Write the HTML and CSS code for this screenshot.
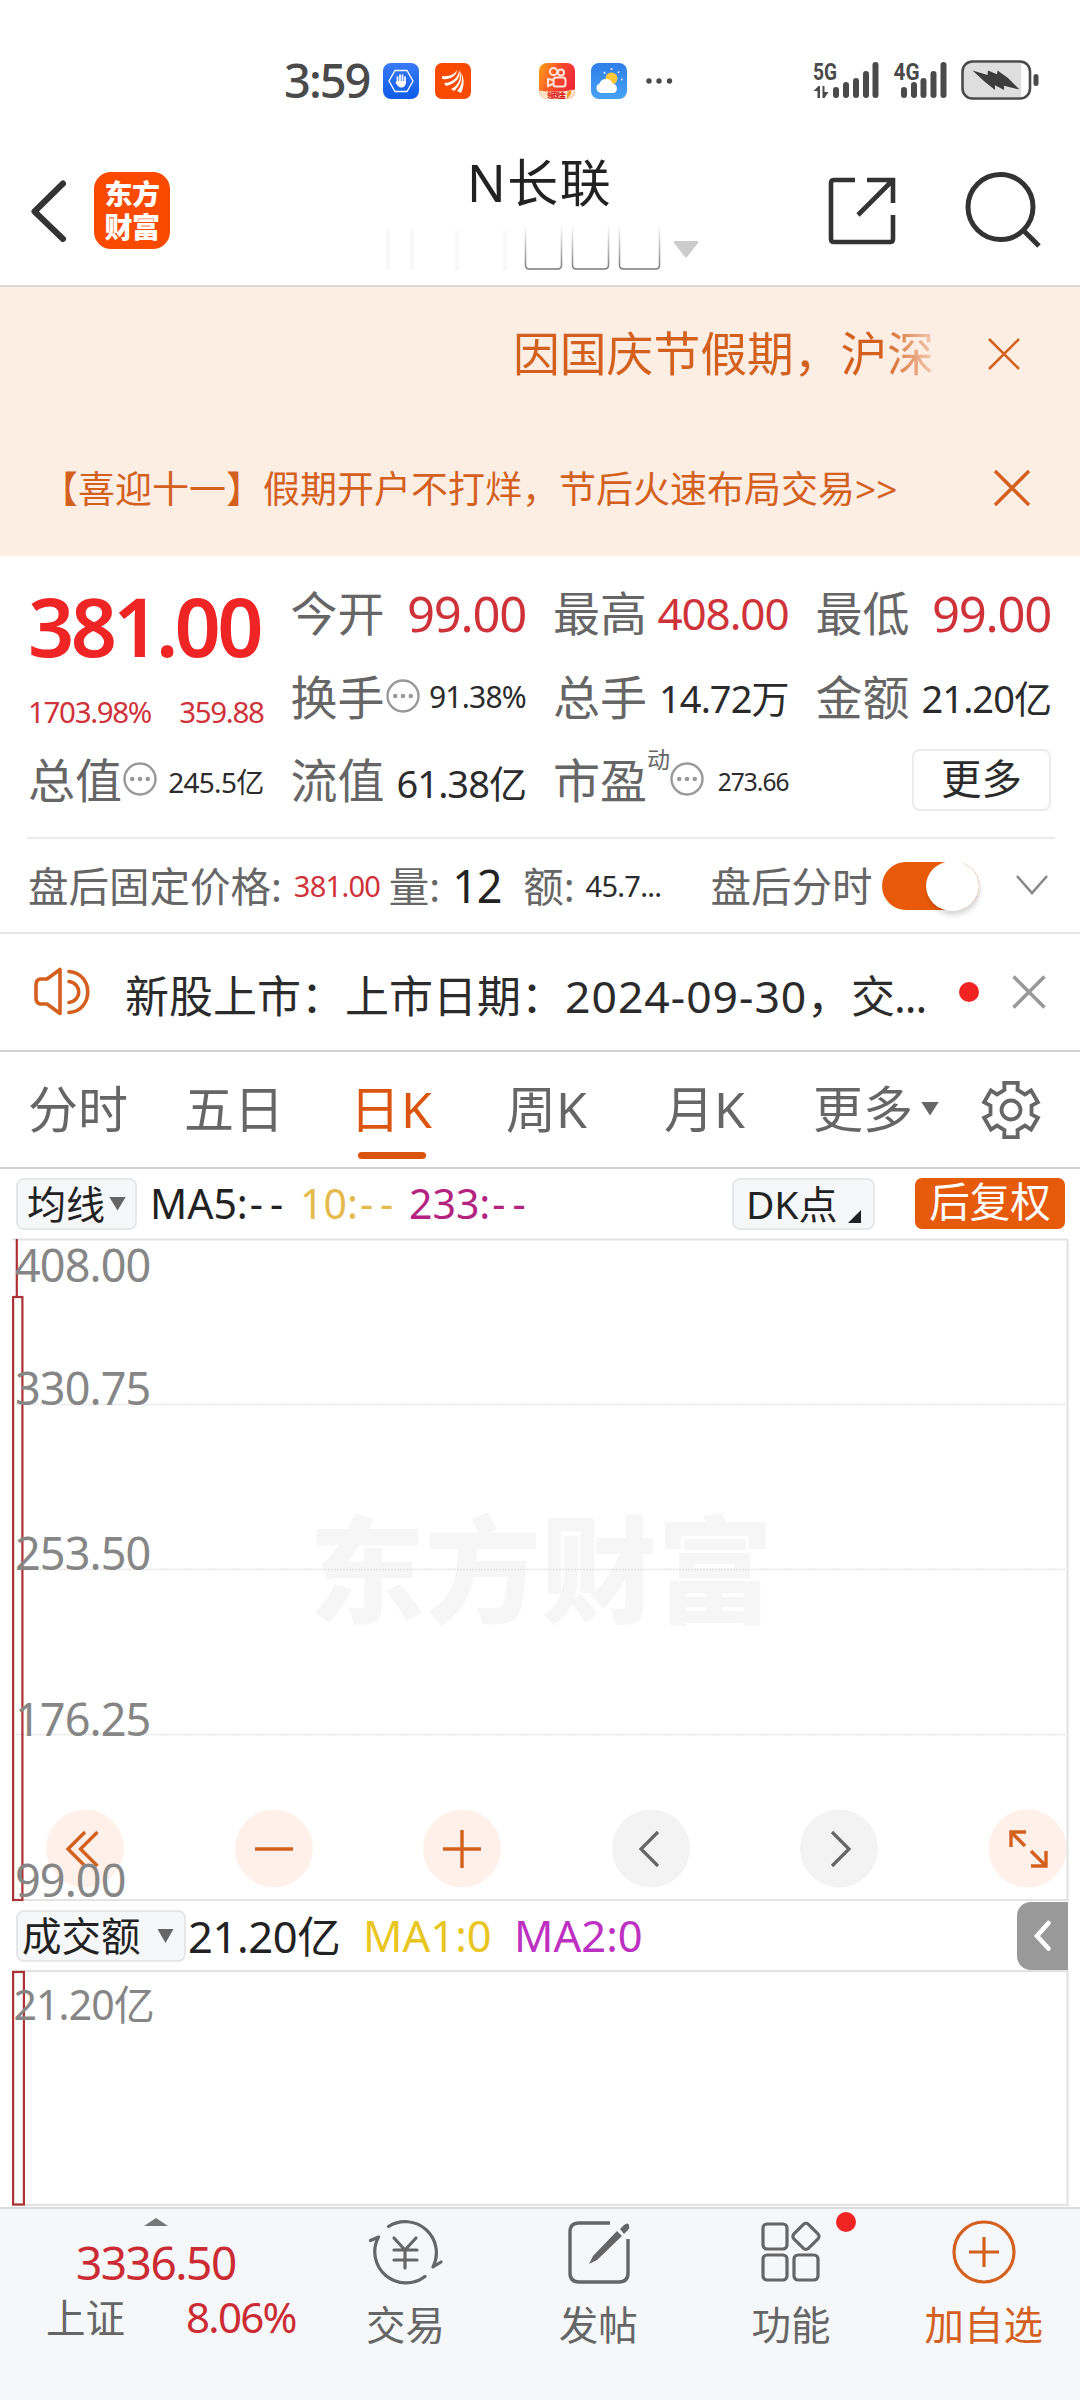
FILE: index.html
```html
<!DOCTYPE html>
<html lang="zh-CN">
<head>
<meta charset="utf-8">
<title>N长联</title>
<link rel="stylesheet" href="styles.css">
</head>
<body>
<svg class="defs" width="0" height="0">
  <symbol id="info" viewBox="0 0 36 36"><circle cx="18" cy="18" r="15.5" fill="none" stroke="#999" stroke-width="2.4"/><circle cx="10.2" cy="18" r="2.3" fill="#999"/><circle cx="18" cy="18" r="2.3" fill="#999"/><circle cx="25.8" cy="18" r="2.3" fill="#999"/></symbol>
</svg>

<div class="status">
  <span class="clock">3:59</span>
  <svg class="app-icon" viewBox="0 0 36 36"><defs><linearGradient id="gb" x1="0" y1="0" x2="0" y2="1"><stop offset="0" stop-color="#3a7af5"/><stop offset="1" stop-color="#0f5be8"/></linearGradient></defs><rect width="36" height="36" rx="8" fill="url(#gb)"/><path d="M12 7.500h12l6 10.500-6 10.500H12L6 18z" fill="none" stroke="#fff" stroke-width="1.300"/><path d="M14.500 14v6M17 12v8M19.500 12v8M22 14v6" stroke="#fff" stroke-width="1.700" stroke-linecap="round"/><path d="M13.600 18h9.300c0 4-1 6.500-4.500 6.500-2.500 0-4-1.500-6-5 .3-1 .8-.9 1.200-.5z" fill="#fff"/></svg>
  <svg class="app-icon" viewBox="0 0 36 36"><rect width="36" height="36" rx="7" fill="#fa4a00"/><path d="M7 13c7 1 13-2 15-6 0 5-6 10-15 9zM9 20c8 0 15-6 15-13 3 7-4 14-13 16zM16 26c7-3 10-10 9-18 3 7 0 15-6 20z" fill="#fff"/><path d="M22 28c5-5 6-12 4-19 4 7 3 15 0 21z" fill="#fff"/></svg>
  <svg class="app-icon gap-wide" viewBox="0 0 36 36"><defs><linearGradient id="go" x1="0" y1="0" x2="1" y2=".4"><stop offset="0" stop-color="#ffa216"/><stop offset=".6" stop-color="#f8472c"/><stop offset="1" stop-color="#ee2a3a"/></linearGradient></defs><rect width="36" height="36" rx="8" fill="url(#go)"/><g fill="none" stroke="#ffe6da" stroke-width="2"><circle cx="14.500" cy="8.500" r="3.600"/><circle cx="22" cy="9.500" r="3"/><rect x="14.500" y="14.500" width="12" height="9" rx="2.500"/><path d="M14 17l-5-1v7l5-2"/></g><path d="M0 27.500q18 3 36-1V28a8 8 0 0 1-8 8H8a8 8 0 0 1-8-8z" fill="#ffe3c4"/><text x="8" y="34.500" font-size="7" font-weight="900" fill="#d9201c" textLength="19">领现金</text><path d="M28 30l4-4v5l-4 5z" fill="#f59a2a"/></svg>
  <svg class="app-icon gap" viewBox="0 0 36 36"><defs><linearGradient id="gw" x1="0" y1="0" x2="0" y2="1"><stop offset="0" stop-color="#2f7de8"/><stop offset="1" stop-color="#47a3f5"/></linearGradient></defs><rect width="36" height="36" rx="8" fill="url(#gw)"/><circle cx="20.500" cy="15.500" r="6" fill="#ffc83c"/><path d="M13 9l1 1.500M20.500 5v2M28 8.500l-1 1.200M31.500 16.500H30" stroke="#fff" stroke-width="1.400"/><path d="M9.500 30a5 5 0 0 1-1-9.500 7 7 0 0 1 13 0A5 5 0 0 1 23 30z" fill="#fff"/></svg>
  <svg class="dots" width="28" height="8" viewBox="0 0 28 8"><g fill="#4a4a4a"><circle cx="4" cy="4" r="2.700"/><circle cx="14" cy="4" r="2.700"/><circle cx="24.500" cy="4" r="2.700"/></g></svg>
  <svg class="signals" width="232" height="46" viewBox="810 57 232 46">
    <g fill="#4a4a4a">
      <text class="net" x="813" y="79.500" textLength="24" lengthAdjust="spacingAndGlyphs">5G</text>
      <text class="net" x="893.500" y="79.500" textLength="26" lengthAdjust="spacingAndGlyphs">4G</text>
      <path d="M813.500 91l5-5h1.500v12h-2.500v-7zM828.500 92l-4 6h-2V86h2v6z"/>
      <rect x="833" y="87" width="6" height="11" rx="3"/><rect x="843" y="82" width="6" height="16" rx="3"/><rect x="853" y="78" width="6" height="20" rx="3"/><rect x="863" y="71" width="6" height="27" rx="3"/><rect x="872.500" y="62" width="6" height="36" rx="3"/>
      <rect x="901" y="87" width="6" height="11" rx="3"/><rect x="911" y="82" width="6" height="16" rx="3"/><rect x="920.500" y="78" width="6" height="20" rx="3"/><rect x="930.500" y="71" width="6" height="27" rx="3"/><rect x="940.500" y="62" width="6" height="36" rx="3"/>
      <rect x="1033.500" y="74" width="5" height="12" rx="2.500"/>
    </g>
    <path d="M972 63h49v34h-49a9 9 0 0 1-9-9V72a9 9 0 0 1 9-9z" fill="#dedede"/>
    <rect x="962.500" y="61.500" width="67.500" height="37" rx="10" fill="none" stroke="#4a4a4a" stroke-width="2.600"/>
    <path d="M972.500 70.500l15 4.500.5-4.500 9 3.800.5-3.800 10.500 7.500 11.500 11.500-15.500-3.800v4.300l-9-4.800v4.800l-10-8z" fill="#3c3c3c"/>
  </svg>
</div>

<header class="header">
  <svg class="back" width="40" height="66" viewBox="0 0 40 66"><path d="M35 5.500L6.500 33.500 35 61" fill="none" stroke="#333" stroke-width="6" stroke-linecap="round" stroke-linejoin="round"/></svg>
  <div class="logo"><span>东方</span><span>财富</span></div>
  <div class="heading">
    <h1>N长联</h1>
    <svg class="ghost" width="330" height="48" viewBox="380 223 330 48">
      <defs><linearGradient id="fade" gradientUnits="userSpaceOnUse" x1="0" y1="224" x2="0" y2="270"><stop offset="0" stop-color="#888" stop-opacity="0"/><stop offset="1" stop-color="#777"/></linearGradient></defs>
      <g fill="none" stroke="url(#fade)" stroke-width="1.600"><path d="M525.500 225v40q0 4 4 4h28q4 0 4-4v-40M572.500 225v40q0 4 4 4h28q4 0 4-4v-40M619.500 225v40q0 4 4 4h32q4 0 4-4v-40"/></g>
      <path d="M388 230v40M412 230v40M457 230v40M505 230v40" stroke="#f9f9f9" stroke-width="4"/>
      <path d="M675 241h22q2 0 1 2l-11 14q-1 1-2 0l-11-14q-1-2 1-2z" fill="#ccc"/>
    </svg>
  </div>
  <svg class="share" width="70" height="70" viewBox="0 0 70 70"><path d="M29 4H8q-3 0-3 3v56q0 3 3 3h56q3 0 3-3V39M41 4h26v23M66 5L32 39" fill="none" stroke="#333" stroke-width="4.600"/></svg>
  <svg class="search" width="80" height="80" viewBox="0 0 80 80"><circle cx="36.500" cy="37" r="32.500" fill="none" stroke="#333" stroke-width="5"/><path d="M60 61l15 15" stroke="#333" stroke-width="5"/></svg>
</header>

<section class="banner">
  <div class="notice first"><span class="marquee">因国庆节假期，沪深</span><svg width="34" height="34" viewBox="0 0 34 34"><path d="M2 2l30 30M32 2L2 32" stroke="#d4601f" stroke-width="2.600"/></svg></div>
  <div class="notice second"><span>【喜迎十一】假期开户不打烊，节后火速布局交易&gt;&gt;</span><svg width="38" height="38" viewBox="0 0 38 38"><path d="M2 2l34 34M36 2L2 36" stroke="#d4601f" stroke-width="3.400"/></svg></div>
</section>

<section class="quote">
  <div class="cell price">381.00</div>
  <div class="cell"><label>今开</label><b class="up n49">99.00</b></div>
  <div class="cell"><label>最高</label><b class="up n44">408.00</b></div>
  <div class="cell"><label>最低</label><b class="up n49">99.00</b></div>
  <div class="cell change"><b class="up n29">1703.98%</b><b class="up n29">359.88</b></div>
  <div class="cell"><label>换手</label><svg class="info"><use href="#info"/></svg><b class="n30">91.38%</b></div>
  <div class="cell"><label>总手</label><b class="n38">14.72万</b></div>
  <div class="cell"><label>金额</label><b class="n38">21.20亿</b></div>
  <div class="cell low"><label>总值</label><svg class="info"><use href="#info"/></svg><b class="n28">245.5亿</b></div>
  <div class="cell low"><label>流值</label><b class="n38">61.38亿</b></div>
  <div class="cell low"><label>市盈</label><sup>动</sup><svg class="info"><use href="#info"/></svg><b class="n25">273.66</b></div>
  <div class="cell end"><button class="more">更多</button></div>
</section>

<section class="after">
  <span class="a-label">盘后固定价格:</span><span class="num up a-price">381.00</span>
  <span class="a-label">量:</span><span class="num a-vol">12</span>
  <span class="a-label">额:</span><span class="num a-amt">45.7...</span>
  <span class="a-label">盘后分时</span>
  <span class="toggle"><i></i></span>
  <svg class="chev" width="34" height="22" viewBox="0 0 34 22"><path d="M2 2l15 17L32 2" fill="none" stroke="#888" stroke-width="2.600"/></svg>
</section>

<section class="news">
  <svg width="58" height="52" viewBox="0 0 58 52"><g fill="none" stroke="#d4601f" stroke-width="3.600" stroke-linejoin="round" stroke-linecap="round"><path d="M27 3.500v44L14 38H7q-4-1-4-6V19q0-5 4-6h7z"/><path d="M36 5.500c25 2 25 39 0 41M36 15.500c13 2 13 19 0 21"/></g></svg>
  <p>新股上市：上市日期：<span class="num">2024-09-30</span>，<span class="rest">交...</span></p>
  <i class="reddot"></i>
  <svg class="close" width="34" height="34" viewBox="0 0 34 34"><path d="M1.500 1.500l31 31M32.500 1.500l-31 31" stroke="#999" stroke-width="3.600"/></svg>
</section>

<nav class="tabs">
  <span>分时</span><span>五日</span><span class="active">日K</span><span>周K</span><span>月K</span><span>更多<i class="tri"></i></span>
  <svg width="60" height="60" viewBox="-30 -30 60 60"><path d="M-6.500-20l-.3-7.200H6.800L6.500-20l7.500 4.400 6.100-3.900 6.800 11.800-6.400 3.300v8.800l6.400 3.300-6.800 11.800-6.100-3.900L6.500 20l.3 7.200H-6.800L-6.500 20l-7.500-4.400-6.100 3.900-6.800-11.800 6.400-3.300v-8.800l-6.400-3.300 6.800-11.800 6.100 3.900z" fill="none" stroke="#666" stroke-width="3.800"/><circle r="9.500" fill="none" stroke="#666" stroke-width="3.800"/></svg>
</nav>

<section class="bar ma">
  <span class="chip c-ma">均线<i class="tri"></i></span>
  <span class="m1">MA5:<em>--</em></span><span class="m2">10:<em>--</em></span><span class="m3">233:<em>--</em></span>
  <span class="chip c-dk">DK点<svg width="13" height="13" viewBox="0 0 13 13"><path d="M13 0v13H0z" fill="#222"/></svg></span>
  <span class="adjust">后复权</span>
</section>

<svg class="chart" width="1080" height="664" viewBox="0 1238 1080 664">
  <path d="M12 1239.500H1067.500V1900H12" fill="none" stroke="#e3e3e3" stroke-width="2.200"/>
  <text class="mark" x="309" y="1614" textLength="464">东方财富</text>
  <path d="M13 1404.500H1066M13 1569.500H1066M13 1734.500H1066" class="grid"/>
  <g fill="#fff1ea"><circle cx="85" cy="1848.500" r="39"/><circle cx="274" cy="1848.500" r="39"/><circle cx="462" cy="1848.500" r="39"/><path d="M1066 1842a39 39 0 1 0 0 13z"/></g>
  <g fill="#f3f3f3"><circle cx="651" cy="1848.500" r="39"/><circle cx="839" cy="1848.500" r="39"/></g>
  <g fill="none" stroke="#d4601f" stroke-width="3.400"><path d="M85 1832l-17 17 17 17M97.500 1832l-17 17 17 17M255 1849h38M443 1849h38M462 1830v38"/><path d="M1026 1832h-15v15M1011 1832l14 14M1031 1866h15v-15M1046 1866l-15-15"/></g>
  <path d="M658 1832l-17 17 17 17M832 1832l17 17-17 17" fill="none" stroke="#666" stroke-width="3.200"/>
  <g fill="none" stroke="#ac3236" stroke-width="2.200"><path d="M16.800 1239v57"/><rect x="13.100" y="1297" width="9.300" height="603"/></g>
  <g class="axis"><text x="15" y="1282">408.00</text><text x="15" y="1405">330.75</text><text x="15" y="1570">253.50</text><text x="15" y="1736">176.25</text><text x="15" y="1897">99.00</text></g>
</svg>

<section class="bar vol">
  <span class="chip c-vol">成交额<i class="tri"></i></span>
  <span class="v1">21.20亿</span><span class="v2">MA1:0</span><span class="v3">MA2:0</span>
  <span class="drawer"><svg width="20" height="34" viewBox="0 0 20 34"><path d="M15.500 4L4 17l11.500 12.500" fill="none" stroke="#fff" stroke-width="4.600" stroke-linecap="round"/></svg></span>
</section>

<svg class="chart" width="1080" height="237" viewBox="0 1970 1080 237">
  <path d="M12 1971.200H1067.500V2204.800H12" fill="none" stroke="#e3e3e3" stroke-width="2.200"/>
  <rect x="13.100" y="1972" width="10.800" height="232.500" fill="none" stroke="#ac3236" stroke-width="2.200"/>
  <g class="axis small"><text x="13.500" y="2020">21.20亿</text></g>
</svg>

<footer class="bottom">
  <div class="index">
    <svg width="24" height="8" viewBox="0 0 24 8"><path d="M12 0l12 8H0z" fill="#777"/></svg>
    <div class="points">3336.50</div>
    <div class="line"><span>上证</span><b>8.06%</b></div>
  </div>
  <div class="item">
    <svg width="76" height="70" viewBox="0 0 76 70"><g fill="none" stroke="#666" stroke-width="3.200" stroke-linecap="round" stroke-linejoin="round"><path d="M21.500 9.500A31.200 31.200 0 0 1 66 50l8-5M58 59.500A31.200 31.200 0 0 1 11.500 20l-8 3.500"/><path d="M27 21l11 12 11-12M27 33h23M27 43h23M38 33v18"/></g></svg>
    <span>交易</span>
  </div>
  <div class="item">
    <svg width="76" height="70" viewBox="0 0 76 70"><path d="M50 6H19q-9 0-9 9v41q0 9 9 9h40q9 0 9-9V22" fill="none" stroke="#666" stroke-width="3.400"/><path d="M57 14l5 5-25 24-8 4 4-8zM60 12l4-4q4-3 5 0t-1 5l-4 4z" fill="#666"/></svg>
    <span>发帖</span>
  </div>
  <div class="item">
    <svg width="76" height="70" viewBox="0 0 76 70"><g fill="none" stroke="#666" stroke-width="3.200"><rect x="10" y="7" width="24" height="25" rx="4"/><rect x="10" y="38" width="24" height="25" rx="4"/><rect x="41" y="38" width="24" height="25" rx="4"/><rect x="42.500" y="9" width="20.500" height="20.500" rx="3.500" transform="rotate(45 52.800 19.500)"/></g></svg>
    <span>功能</span><i class="reddot"></i>
  </div>
  <div class="item hot">
    <svg width="76" height="70" viewBox="0 0 76 70"><circle cx="38" cy="35" r="30" fill="none" stroke="#d4601f" stroke-width="3.200"/><path d="M23 35h30M38 20v30" stroke="#d4601f" stroke-width="3.200"/></svg>
    <span>加自选</span>
  </div>
</footer>
</body>
</html>
```
FILE: styles.css
```css
* { box-sizing: border-box; }
body {
  margin: 0; width: 1080px; height: 2400px; overflow: hidden; background: #fff; color: #2b2b2b;
  font-family: "Noto Sans", "Noto Sans CJK SC", sans-serif; display: flex; flex-direction: column;
}
body > * { flex: none; }
svg { display: block; flex: none; }
.defs { position: absolute; }
b, em, i, h1 { font-weight: 400; font-style: normal; margin: 0; }

/* status bar */
.status { height: 160px; display: flex; align-items: center; padding-left: 284px; color: #4a4a4a; }
.status .clock { width: 99px; font-size: 47px; font-weight: 500; letter-spacing: -2px; line-height: 60px; }
.app-icon { width: 36px; height: 36px; margin-right: 16px; margin-top: 2px; }
.app-icon.gap-wide { margin-left: 52px; }
.app-icon.gap { margin-right: 18px; }
.dots { margin-top: 2px; }
.signals { margin-left: 137px; }
.net { font-family: Roboto, sans-serif; font-weight: 700; font-size: 24px; }

/* header */
.header { height: 127px; display: flex; align-items: flex-start; border-bottom: 2px solid #dcd8d5; }
.back { margin: 18px 0 0 28px; }
.logo { width: 76px; height: 77px; margin: 12px 0 0 26px; border-radius: 17px; background: #fa4a00; color: #fff; display: flex; flex-direction: column; align-items: center; justify-content: center; font-weight: 900; font-size: 28px; line-height: 33px; letter-spacing: -.5px; }
.logo span { height: 33px; }
.heading { width: 330px; margin-left: 210px; }
.heading h1 { margin-left: 87px; margin-top: -8px; height: 71px; line-height: 60px; font-size: 51px; letter-spacing: 1.500px; color: #222; white-space: nowrap; }
.share { margin: 16px 0 0 116px; }
.search { margin: 10px 0 0 68px; }

/* banner */
.banner { height: 269px; background: #fdeee4; color: #d4601f; }
.notice { display: flex; align-items: center; }
.first { height: 134px; padding-left: 513px; font-size: 46.800px; }
.marquee { width: 424px; margin-right: 50px; margin-top: -6px; white-space: nowrap; -webkit-mask-image: linear-gradient(90deg, #000 87%, rgba(0,0,0,.2)); mask-image: linear-gradient(90deg, #000 87%, rgba(0,0,0,.2)); }
.second { height: 135px; padding-left: 41px; font-size: 37px; }
.second span { width: 952px; margin-top: -3px; white-space: nowrap; }
.second svg { margin-top: -1px; }

/* quote grid */
.quote { height: 281px; padding: 15px 29px 0 28px; display: grid; grid-template-columns: repeat(4, 1fr); grid-template-rows: 84px 83px 83px; column-gap: 27px; }
.cell { display: flex; align-items: center; min-width: 0; white-space: nowrap; }
.cell label { font-size: 47px; line-height: 60px; color: #666; }
.cell b { margin-left: auto; letter-spacing: -.025em; }
.up { color: #cf3238; }
.cell .n49 { font-size: 49px; } .cell .n44 { font-size: 44px; } .cell .n38 { font-size: 38px; }
.cell .n30 { font-size: 30px; } .cell .n29 { font-size: 29.500px; letter-spacing: -.045em; } .cell .n28 { font-size: 28px; } .cell .n25 { font-size: 24.500px; letter-spacing: -.04em; }
.cell.low b { margin-top: 3px; }
.cell.price { font-size: 81px; font-weight: 600; color: #ee2524; letter-spacing: -3.700px; padding-top: 26px; line-height: 60px; }
.cell.change { padding-top: 29px; }
.cell.change b:first-child { margin-left: 0; }
.info { width: 36px; height: 36px; margin-top: -2px; }
sup { font-size: 23px; line-height: 24px; color: #666; align-self: flex-start; margin-top: 9px; margin-right: -1px; }
.end { justify-content: flex-end; }
.more { width: 139px; height: 62px; border: 2px solid #ebebeb; border-radius: 8px; background: #fff; font: inherit; font-size: 40.500px; line-height: 50px; color: #2b2b2b; padding: 0 0 1px; }

/* after-hours row */
.after { height: 97px; padding-left: 28px; border-bottom: 2px solid #e6e6e6; display: flex; align-items: center; white-space: nowrap; background: linear-gradient(#ececec, #ececec) 27px 0 / 1028px 2px no-repeat; }
.a-label { font-size: 40.500px; color: #666; }
.num { letter-spacing: -.025em; }
.a-price { font-size: 29px; width: 95px; margin-left: 12px; margin-top: 1px; }
.a-vol { font-size: 45px; width: 71px; margin-left: 12px; margin-top: 1px; color: #222; }
.a-amt { font-size: 29px; width: 125px; margin-left: 11px; margin-top: 1px; }
.toggle { width: 97px; height: 48px; margin-left: 9px; margin-top: 2px; border-radius: 24px; background: #e85a0a; display: flex; justify-content: flex-end; }
.toggle i { width: 53px; height: 50px; margin: -1px 0; border-radius: 50%; background: #fff; box-shadow: 1px 4px 5px rgba(0,0,0,.16); }
.chev { margin-left: 36px; margin-top: 1px; }

/* news */
.news { height: 118px; padding-left: 33px; border-bottom: 2px solid #d2d2d2; display: flex; align-items: center; }
.news > svg:first-child { margin-top: -1px; }
.news p { margin: 8px 0 0 34px; width: 834px; font-size: 44px; line-height: 60px; white-space: nowrap; }
.news .num { display: inline-block; width: 242px; font-size: 44.500px; letter-spacing: 1px; }
.rest { letter-spacing: -1px; }
.reddot { width: 20px; height: 20px; border-radius: 50%; background: #f22323; flex: none; }
.close { margin-left: 33px; }

/* period tabs */
.tabs { height: 117px; border-bottom: 2px solid #d2d2d2; display: grid; grid-template-columns: 156px 166px 156px 158px 149px 168px 60px; padding-left: 28px; align-items: center; font-size: 50px; line-height: 70px; color: #666; white-space: nowrap; }
.tabs span { position: relative; top: -1px; }
.tabs .active { color: #dc5510; letter-spacing: 1px; }
.tabs .active::after { content: ""; position: absolute; left: 8px; top: 78px; width: 68px; height: 7px; border-radius: 4px; background: #dc5510; }
.tri { display: inline-block; width: 18px; height: 14px; background: #666; clip-path: polygon(0 0, 100% 0, 50% 100%); vertical-align: 0; }
.tabs .tri { margin-left: 8px; vertical-align: 12px; }

/* indicator bars */
.bar { display: flex; align-items: center; white-space: nowrap; color: #222; }
.ma { height: 69px; font-size: 41px; }
.chip { height: 52px; border: 2px solid #e6e7e9; border-radius: 8px; background: #f6f7f9; display: flex; align-items: center; line-height: 48px; }
.c-ma { width: 121px; margin-left: 16px; padding-left: 9px; font-size: 39px; }
.c-ma .tri { margin-left: 4px; width: 17px; }
.bar em { letter-spacing: 7px; margin-left: 2px; }
.m1, .m2, .m3 { margin-top: -2px; }
.m1 { margin-left: 13px; width: 150px; }
.m2 { width: 109px; color: #e6b94c; }
.m3 { width: 323px; color: #b3237f; }
.c-dk { width: 143px; padding-left: 12px; font-size: 39px; letter-spacing: -.1px; }
.c-dk svg { margin: 26px 0 0 11px; }
.adjust { margin-left: 40px; width: 150px; height: 51px; border-radius: 7px; background: #e65a0c; color: #fff; font-size: 40.500px; line-height: 48px; text-align: center; }
.axis { font-size: 45px; letter-spacing: -.9px; fill: #868686; }
.axis.small { font-size: 41px; }
.grid { stroke: #e4e4e4; stroke-width: 1.300; stroke-dasharray: 2 1; }
.mark { font-size: 116px; font-weight: 900; fill: #f6f6f6; }
.vol { height: 68px; font-size: 43.500px; }
.c-vol { width: 170px; margin-left: 16px; padding-left: 4px; font-size: 39.500px; line-height: 46px; }
.c-vol .tri { margin-left: 17px; width: 16px; }
.v1, .v2, .v3 { margin-top: -3px; }
.v1 { margin-left: 2px; width: 175px; letter-spacing: -.4px; }
.v2 { width: 151px; color: #e9c520; }
.v3 { width: 503px; color: #bd31c2; }
.drawer { width: 51px; height: 68px; background: #999; border-radius: 14px 0 0 14px; display: flex; align-items: center; padding-left: 16px; }

/* bottom navigation */
.bottom { height: 193px; border-top: 2px solid #d9dcde; background: #f6f7f9; display: grid; grid-template-columns: 309px repeat(4, 1fr); color: #666; }
.index { display: flex; flex-direction: column; }
.index > svg { margin: 9px 0 0 144px; }
.points { margin-left: 76px; margin-top: 3px; height: 60px; line-height: 66px; font-size: 46px; letter-spacing: -1.500px; color: #cb2c33; }
.line { display: flex; align-items: center; margin: -3px 0 0 46px; height: 60px; font-size: 39.500px; }
.line b { margin-left: 61px; font-size: 42px; letter-spacing: -1.700px; color: #cb2c33; }
.item { display: flex; flex-direction: column; align-items: center; position: relative; padding-top: 8px; }
.item span { font-size: 39.500px; line-height: 50px; margin-top: 13px; }
.item .reddot { position: absolute; left: 141px; top: 3px; }
.hot { color: #d4601f; }
```
